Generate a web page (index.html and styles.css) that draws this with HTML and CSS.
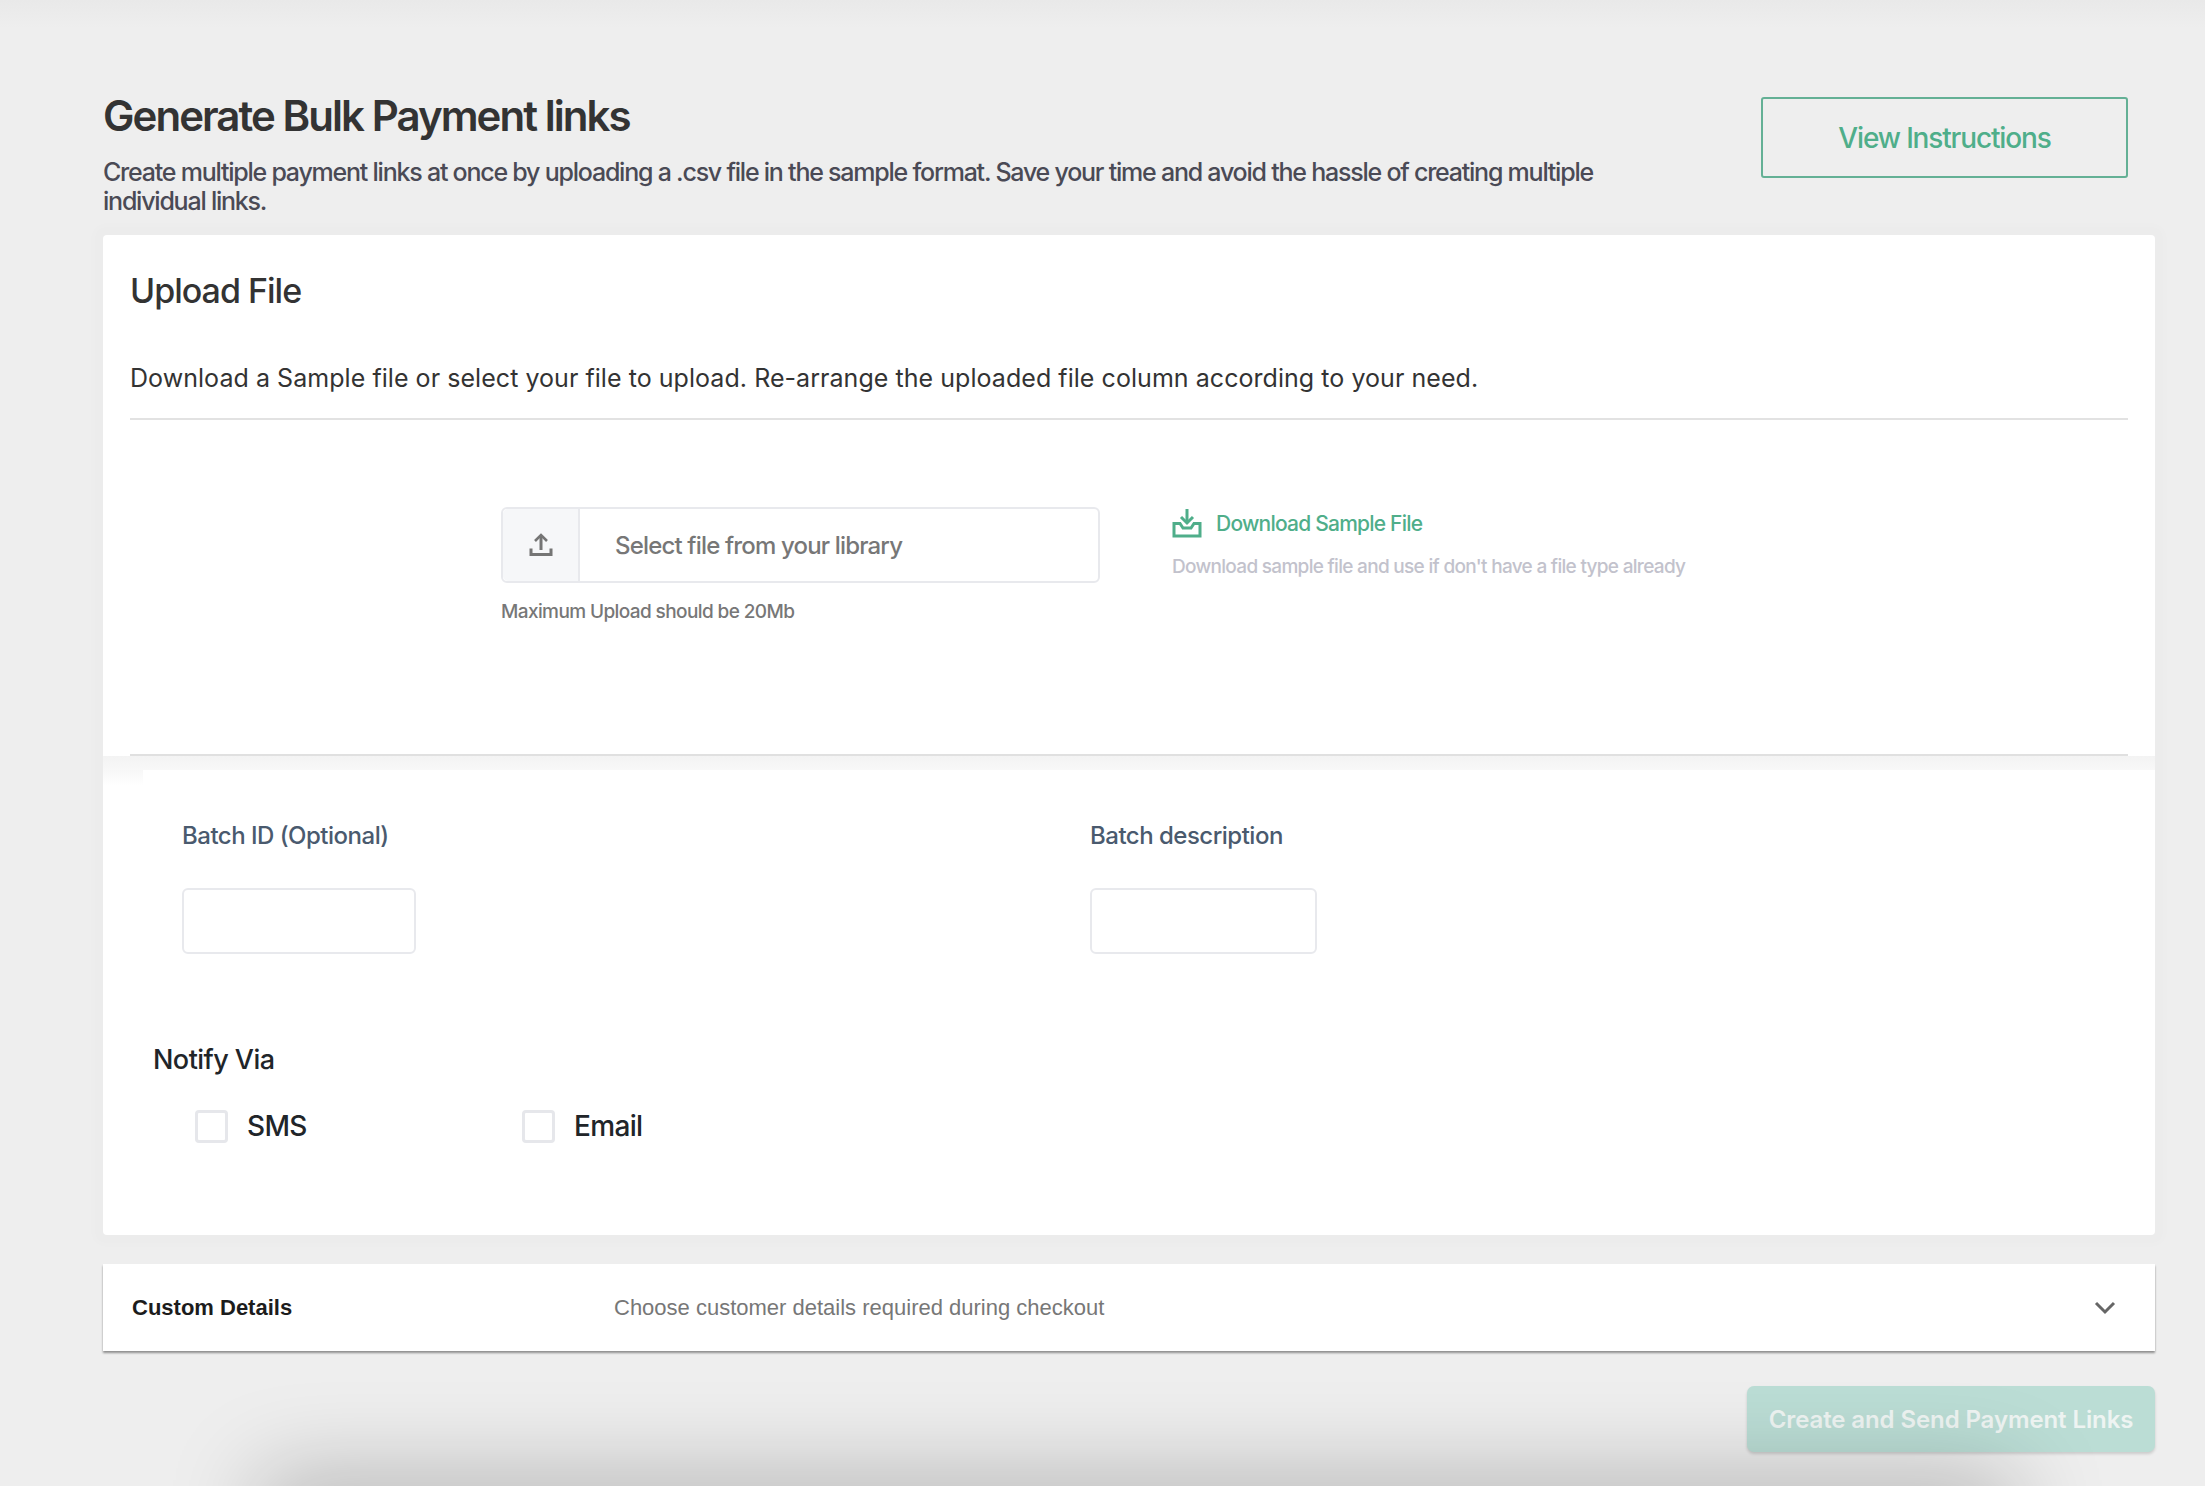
FILE: index.html
```html
<!DOCTYPE html>
<html lang="en">
<head>
<meta charset="utf-8">
<title>Generate Bulk Payment links</title>
<link rel="stylesheet" href="styles.css">
</head>
<body>
<div class="page">
  <header class="head">
    <div class="head-text">
      <h1 class="title">Generate Bulk Payment links</h1>
      <p class="desc">Create multiple payment links at once by uploading a .csv file in the sample format. Save your time and avoid the hassle of creating multiple individual links.</p>
    </div>
    <button class="btn-outline" type="button">View Instructions</button>
  </header>

  <section class="card">
    <div class="card-top">
      <h2 class="card-title">Upload File</h2>
      <p class="card-sub">Download a Sample file or select your file to upload. Re-arrange the uploaded file column according to your need.</p>
    </div>
    <div class="upload-row">
      <div class="upload-col">
        <div class="file-box">
          <span class="file-icon">
            <svg width="24" height="24" viewBox="0 0 24 24" fill="none" stroke="#757575" stroke-width="3"><path d="M12 17V3"/><path d="M6 8l6-6 6 6" stroke-width="2.6"/><path d="M2 15.500V21.500H22V15.500"/></svg>
          </span>
          <span class="file-text">Select file from your library</span>
        </div>
        <p class="file-hint">Maximum Upload should be 20Mb</p>
      </div>
      <div class="sample-col">
        <div class="sample-link">
          <svg width="30" height="30" viewBox="0 0 30 30" fill="none" stroke="#4fae8a" stroke-width="3"><path d="M15 1V14"/><path d="M9 9l6 6 6-6"/><path d="M2 15.500H8L11 20H19L22 15.500H28V28H2Z"/></svg>
          <span>Download Sample File</span>
        </div>
        <p class="sample-note">Download sample file and use if don't have a file type already</p>
      </div>
    </div>
    <div class="rule"></div>
    <div class="fade"></div>
    <div class="fields">
      <div class="field field-a">
        <label class="field-label">Batch ID (Optional)</label>
        <div class="input input-a"></div>
      </div>
      <div class="field">
        <label class="field-label">Batch description</label>
        <div class="input input-b"></div>
      </div>
    </div>
    <h3 class="notify">Notify Via</h3>
    <div class="checks">
      <label class="check check-a"><span class="box"></span>SMS</label>
      <label class="check"><span class="box"></span>Email</label>
    </div>
  </section>

  <section class="custom">
    <strong class="custom-name">Custom Details</strong>
    <span class="custom-sub">Choose customer details required during checkout</span>
    <svg class="chev" width="22" height="14" viewBox="0 0 22 14" fill="none" stroke="#666" stroke-width="3"><path d="M2 2l9 9 9-9"/></svg>
  </section>

  <div class="actions">
    <button class="btn-solid" type="button">Create and Send Payment Links</button>
  </div>
</div>
</body>
</html>
```
FILE: styles.css
```css
* { box-sizing: border-box; }
html, body { margin: 0; padding: 0; }
body {
  background: #eeeeee;
  font-family: "Inter", "Liberation Sans", sans-serif;
  color: #333;
}
.page {
  position: relative;
  width: 2205px;
  height: 1486px;
  overflow: hidden;
  padding: 97px 50px 0 103px;
  background: linear-gradient(#e9e9e9, #eeeeee 28px);
}
.page::after {
  content: "";
  position: absolute;
  left: 270px;
  right: 200px;
  bottom: -60px;
  height: 60px;
  box-shadow: 0 0 90px 10px rgba(0, 0, 0, .25);
  pointer-events: none;
}
.head {
  display: flex;
  justify-content: space-between;
  align-items: flex-start;
  padding-right: 27px;
  height: 138px;
}
.head-text { width: 1520px; }
.title {
  margin: -1px 0 0;
  font-size: 42px;
  line-height: 40px;
  font-weight: 600;
  letter-spacing: -1.95px;
  color: #333;
}
.desc {
  margin: 22px 0 0;
  font-size: 25px;
  line-height: 29px;
  font-weight: 500;
  letter-spacing: -1.23px;
  color: #4a4a55;
}
.btn-outline {
  width: 367px;
  height: 81px;
  border: 2px solid #64b095;
  border-radius: 3px;
  background: transparent;
  color: #4fae8a;
  font: 500 28px "Inter", sans-serif;
  letter-spacing: -1.15px;
}
.card {
  position: relative;
  height: 1000px;
  background: #fff;
  border-radius: 4px;
  box-shadow: 0 0 8px 10px rgba(0, 0, 0, .012);
}
.card-top {
  margin: 0 27px;
  height: 185px;
  padding-top: 36px;
  border-bottom: 2px solid #e2e2e2;
}
.card-title {
  margin: 0;
  font-size: 34px;
  line-height: 40px;
  font-weight: 500;
  letter-spacing: -1px;
  color: #333;
}
.card-sub {
  margin: 52px 0 0;
  font-size: 25px;
  line-height: 30px;
  font-weight: 400;
  letter-spacing: .05px;
  color: #333;
}
.upload-row {
  display: flex;
  height: 334px;
  padding: 87px 0 0 398px;
}
.upload-col { width: 599px; }
.file-box {
  display: flex;
  align-items: center;
  height: 76px;
  border: 2px solid #e8e9ed;
  border-radius: 6px;
}
.file-icon {
  display: flex;
  align-items: center;
  justify-content: center;
  width: 77px;
  height: 100%;
  background: #f6f7f9;
  border-right: 2px solid #e8e9ed;
  border-radius: 5px 0 0 5px;
}
.file-text {
  margin-left: 35px;
  font-size: 24px;
  font-weight: 500;
  letter-spacing: -.83px;
  color: #777;
}
.file-hint {
  margin: 17px 0 0;
  font-size: 19px;
  line-height: 24px;
  font-weight: 500;
  letter-spacing: -.6px;
  color: #777;
}
.sample-col { margin-left: 72px; }
.sample-link {
  display: flex;
  align-items: center;
  gap: 14px;
  margin-top: 1px;
  font-size: 21px;
  font-weight: 500;
  letter-spacing: -.78px;
  color: #4fae8a;
}
.sample-note {
  margin: 17px 0 0;
  font-size: 19px;
  line-height: 24px;
  font-weight: 500;
  letter-spacing: -.7px;
  color: #c2c2cc;
}
.rule {
  margin: 0 27px;
  height: 2px;
  background: #e0e0e0;
}
.fade {
  position: absolute;
  left: 0;
  right: 0;
  top: 521px;
  height: 30px;
  background:
    linear-gradient(#f3f3f3, #f8f8f8) 0 0 / 100% 14px no-repeat,
    linear-gradient(#f7f7f7, #ffffff) 0 14px / 40px 16px no-repeat;
}
.fields {
  display: flex;
  padding: 65px 0 0 79px;
}
.field-a { width: 908px; }
.field-label {
  display: block;
  font-size: 24px;
  line-height: 30px;
  font-weight: 500;
  letter-spacing: -.5px;
  color: #4a5a6e;
}
.input {
  height: 66px;
  margin-top: 37px;
  background: #fff;
  border: 2px solid #e8e9ed;
  border-radius: 6px;
}
.input-a { width: 234px; }
.input-b { width: 227px; }
.notify {
  margin: 0;
  padding: 89px 0 0 50px;
  font-size: 27px;
  line-height: 34px;
  font-weight: 500;
  letter-spacing: -.55px;
  color: #212529;
}
.checks {
  display: flex;
  padding: 32px 0 0 92px;
}
.check {
  display: flex;
  align-items: center;
  gap: 19px;
  font-size: 28px;
  font-weight: 500;
  letter-spacing: -.65px;
  color: #212529;
}
.check-a { width: 327px; }
.box {
  width: 33px;
  height: 33px;
  background: #fff;
  border: 3px solid #e6e7eb;
  border-radius: 4px;
}
.custom {
  display: flex;
  align-items: center;
  height: 87px;
  margin-top: 29px;
  padding: 0 39px 0 29px;
  background: #fff;
  box-shadow: 0 2px 2px rgba(0, 0, 0, .4);
  font-family: "Liberation Sans", Arial, sans-serif;
  font-size: 22px;
}
.custom-name {
  width: 482px;
  font-weight: 700;
  color: #1c1c1c;
}
.custom-sub { color: #777; flex: 1; letter-spacing: 0; }
.actions {
  display: flex;
  justify-content: flex-end;
  margin-top: 35px;
}
.btn-solid {
  width: 408px;
  height: 66px;
  border: 0;
  border-radius: 7px;
  background: #bbddd5;
  color: #eef4f2;
  font: 600 24px "Inter", sans-serif;
  letter-spacing: -.1px;
  box-shadow: 0 2px 3px rgba(0, 0, 0, .15);
}
```
